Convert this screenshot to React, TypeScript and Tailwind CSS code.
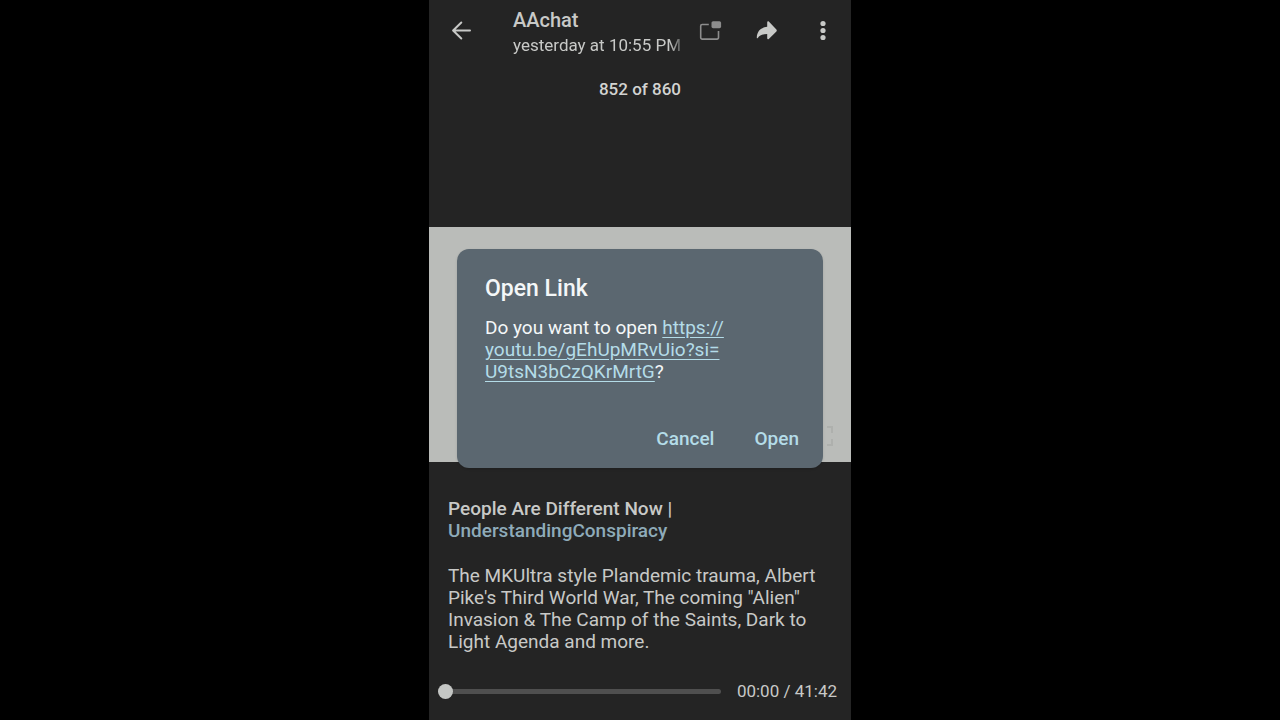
import { useState } from "react";

const ArrowBackIcon = () => (
  <svg viewBox="0 0 24 24" className="size-6" fill="none" stroke="currentColor" strokeWidth="2" strokeLinecap="round" strokeLinejoin="round">
    <path d="M21 12.5H4.3M12.3 4.5l-8.200 8 8.200 8" />
  </svg>
);

const PipIcon = () => (
  <svg viewBox="0 0 24 24" className="size-6" fill="none">
    <path
      d="M9.8 6.5H3.2A1.5 1.5 0 0 0 1.7 8v11.6a1.5 1.5 0 0 0 1.5 1.5H18a1.5 1.5 0 0 0 1.5-1.5V13"
      stroke="currentColor"
      strokeWidth="1.6"
    />
    <rect x="12.5" y="3.2" width="9.6" height="7" rx="1.6" fill="currentColor" />
  </svg>
);

const ForwardIcon = () => (
  <svg viewBox="0 0 24 24" className="size-6" fill="currentColor">
    <path d="M12.2 4.3c0-1 .9-1.3 1.6-.7l7.6 7.9c.5.6.5 1.3 0 1.9l-7.6 7.500c-.7.6-1.6.3-1.6-.7V16c-4.800 0-7.400 1.100-9.400 3.900-.5.6-1.100.4-1-.4C1.9 13.700 5.400 9.500 12.200 8.700z" />
  </svg>
);

const MoreIcon = () => (
  <svg viewBox="0 0 24 24" className="size-6" fill="currentColor">
    <circle cx="12" cy="5.5" r="2.6" />
    <circle cx="12" cy="12.5" r="2.6" />
    <circle cx="12" cy="19.5" r="2.6" />
  </svg>
);

const FullscreenIcon = () => (
  <svg viewBox="0 0 24 24" className="size-6" fill="none" stroke="currentColor" strokeWidth="2">
    <path d="M3 9V3h5M16 3h5v6M21 15v6h-5M8 21H3v-6" />
  </svg>
);

function Header() {
  return (
    <header className="flex h-15 items-center pl-5 pr-4 text-[#c8c9c7]">
      <button type="button" aria-label="Back">
        <ArrowBackIcon />
      </button>
      <div className="ml-10 min-w-0 flex-1 pt-1.5">
        <h1 className="text-xl leading-6 font-medium">AAchat</h1>
        <p className="mask-r-from-90% text-[17px] leading-[26px] whitespace-nowrap">yesterday at 10:55 PM</p>
      </div>
      <div className="ml-3 flex gap-8">
        <button type="button" aria-label="Picture in picture" className="text-[#8c8c8c]">
          <PipIcon />
        </button>
        <button type="button" aria-label="Forward">
          <ForwardIcon />
        </button>
        <button type="button" aria-label="More options">
          <MoreIcon />
        </button>
      </div>
    </header>
  );
}

function OpenLinkDialog({ onClose }: { onClose: () => void }) {
  return (
    <div
      role="dialog"
      aria-labelledby="dialog-title"
      className="absolute inset-x-7 top-[22px] rounded-xl bg-[#5b6770] px-7 pt-6 pb-[15px] shadow-sm"
    >
      <h2 id="dialog-title" className="text-[23px] leading-8 font-medium text-[#f4f7f8]">
        Open Link
      </h2>
      <p className="mt-3 text-[19px] leading-[22px] text-[#f4f7f8]">
        Do you want to open{" "}
        <a href="https://youtu.be/gEhUpMRvUio?si=U9tsN3bCzQKrMrtG" className="text-[#b4dce8] underline underline-offset-3">
          https://
          <wbr />
          youtu.be/gEhUpMRvUio?si=
          <wbr />
          U9tsN3bCzQKrMrtG
        </a>
        ?
      </p>
      <div className="-mr-1 mt-[42px] flex justify-end gap-10 text-[19px] leading-7 font-medium text-[#b4dce8]">
        <button type="button" onClick={onClose}>
          Cancel
        </button>
        <button type="button" onClick={onClose}>
          Open
        </button>
      </div>
    </div>
  );
}

function Controls() {
  const [position, setPosition] = useState(0);

  return (
    <div className="mt-auto flex items-center gap-4 pt-4 pr-3.5 pb-[17px] pl-[9px] text-[#c8c9c7]">
      <input
        type="range"
        aria-label="Seek"
        min={0}
        max={2502}
        value={position}
        onChange={(e) => setPosition(Number(e.target.value))}
        className="h-4 min-w-0 flex-1 appearance-none bg-transparent [&::-webkit-slider-runnable-track]:h-[5px] [&::-webkit-slider-runnable-track]:rounded-full [&::-webkit-slider-runnable-track]:bg-[#4f4f4f] [&::-webkit-slider-thumb]:-mt-[5px] [&::-webkit-slider-thumb]:size-[15px] [&::-webkit-slider-thumb]:appearance-none [&::-webkit-slider-thumb]:rounded-full [&::-webkit-slider-thumb]:bg-[#c4c6c4]"
      />
      <span className="text-[17px] leading-6">00:00 / 41:42</span>
    </div>
  );
}

export default function App() {
  const [dialogOpen, setDialogOpen] = useState(true);

  return (
    <div className="min-h-screen bg-black font-['Roboto',sans-serif]">
      <main className="mx-auto flex min-h-screen max-w-[422px] flex-col bg-[#242424]">
        <Header />
        <p className="mt-[17px] text-center text-[17px] leading-6 font-medium text-[#d2d3d1]">852 of 860</p>

        <section className="relative mt-[126px] aspect-[422/235] bg-[#babcb9]">
          <button type="button" aria-label="Full screen" className="absolute right-4 bottom-3.5 text-[#aeb0ad]">
            <FullscreenIcon />
          </button>
          {dialogOpen && <OpenLinkDialog onClose={() => setDialogOpen(false)} />}
        </section>

        <section className="px-[19px] pt-9 text-[19px] leading-[22px] text-[#c8c9c7]">
          <h2 className="font-medium">
            People Are Different Now |{" "}
            <a href="#understanding" className="text-[#8eabb9]">
              UnderstandingConspiracy
            </a>
          </h2>
          <p className="mt-[23px]">
            The MKUltra style Plandemic trauma, Albert Pike's Third World War, The coming "Alien" Invasion &amp; The
            Camp of the Saints, Dark to Light Agenda and more.
          </p>
        </section>

        <Controls />
      </main>
    </div>
  );
}
